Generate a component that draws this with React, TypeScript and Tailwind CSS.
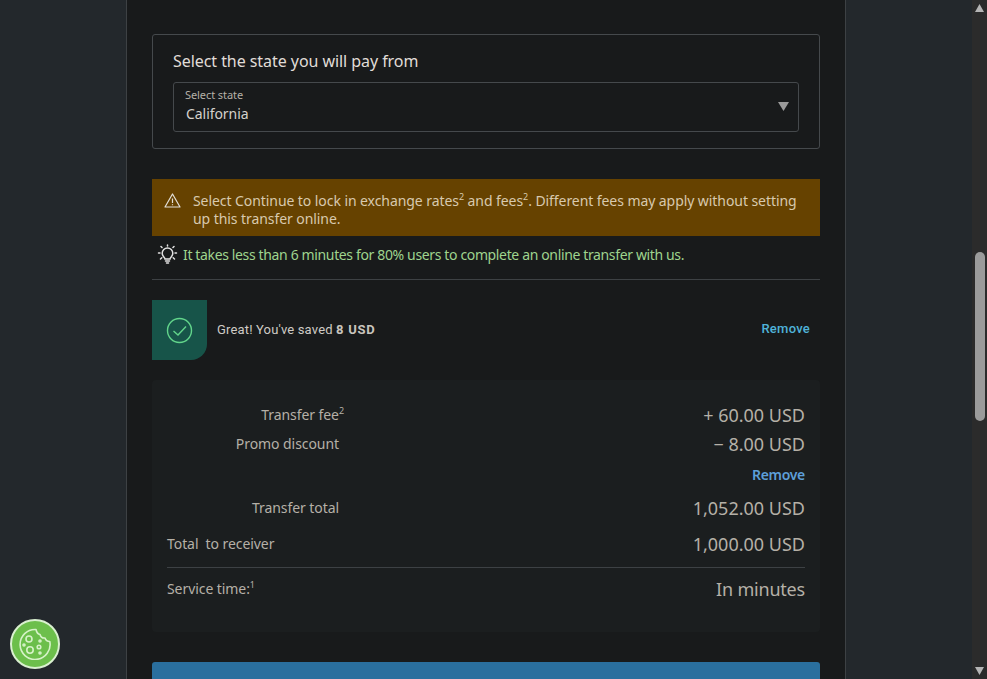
import React from "react";

const Row = ({ label, value, labelClass, rowClass }: { label: React.ReactNode; value: string; labelClass: string; rowClass: string }) => (
  <div className={`flex justify-between items-start ${rowClass}`}>
    <div className={`pt-[2px] text-[14px] leading-[20px] tracking-[-0.07px] text-[#b5b0a7] ${labelClass}`}>{label}</div>
    <div className="text-[18px] leading-[24px] text-[#b5b0a7]">{value}</div>
  </div>
);

const Sup = ({ children, className = "" }: { children: React.ReactNode; className?: string }) => (
  <sup className={`text-[9px] leading-none align-baseline relative -top-[6px] ${className}`}>{children}</sup>
);

export default function App() {
  return (
    <div className="relative flex h-[679px] w-[987px] overflow-hidden bg-[#23282c] font-['Noto_Sans','Open_Sans',sans-serif]">
      <div className="w-[126px] shrink-0 bg-[#23282c]" />
      <main className="w-[720px] shrink-0 border-x border-[#3d4144] bg-[#181a1b] pl-[25px] pr-[25px] pt-[34px]">
        <section className="h-[115px] rounded-[3px] border border-[#45494c] px-5 pt-[14px]">
          <h2 className="text-[16px] leading-[24px] tracking-[-0.06px] text-[#e0ddd8] font-normal">Select the state you will pay from</h2>
          <div className="relative mt-[9px] h-[50px] rounded-[3px] border border-[#45494c] pl-[11px] pt-[5px]">
            <div className="text-[11px] leading-[14px] tracking-[-0.08px] text-[#b5b0a7]">Select state</div>
            <div className="ml-[1px] mt-[2px] text-[14px] leading-[20px] tracking-[-0.06px] text-[#d5d1cb]">California</div>
            <svg className="absolute right-[9px] top-[19px]" width="11" height="9" viewBox="0 0 11 9">
              <path d="M0 0h11L5.500 9z" fill="#9a9a9a" />
            </svg>
          </div>
        </section>

        <div className="mt-[30px] flex h-[57px] bg-[#664200] pl-[12px] pr-[15px] pt-[13px]">
          <svg className="mt-[1px] shrink-0" width="17" height="15" viewBox="0 0 17 15" fill="none" stroke="#e3dfd8" strokeWidth="1.200" strokeLinejoin="round">
            <path d="M8.500 1 16 14H1z" />
            <path d="M8.500 5.500v4.500M8.500 11.300v1" />
          </svg>
          <p className="ml-[12px] text-[14px] leading-[18px] tracking-[-0.07px] text-[#d8c9ae]">
            Select Continue to lock in exchange rates<Sup>2</Sup> and fees<Sup>2</Sup>. Different fees may apply without setting up this transfer online.
          </p>
        </div>

        <div className="mt-[8px] flex h-[21px] items-center pl-[5px]">
          <svg width="21" height="21" viewBox="0 0 21 21" fill="none" stroke="#e2e2e2" strokeWidth="1.500" strokeLinecap="round">
            <path d="M8 15c0-1.500-2.800-2.500-2.800-5.700a5.300 5.300 0 0 1 10.600 0C15.800 12.500 13 13.500 13 15z" />
            <path d="M8.500 17h4M9.500 19h2M10.500 1v1M4 2.500l1 1M17 2.500l-1 1M1.500 9h1.500M18 9h1.500M3.500 15l1.300-1.200M17.500 15l-1.300-1.200" />
          </svg>
          <span className="ml-[5px] text-[14px] leading-[20px] tracking-[-0.36px] text-[#9fd48e]">It takes less than 6 minutes for 80% users to complete an online transfer with us.</span>
        </div>

        <div className="mt-[14px] border-t border-[#3d4144]" />

        <div className="mt-[20px] flex h-[60px] items-center">
          <div className="flex h-full w-[55px] items-center justify-center rounded-br-[16px] bg-[#175449]">
            <svg width="27" height="27" viewBox="0 0 27 27" fill="none" stroke="#62d58b" strokeWidth="1.400">
              <circle cx="13.500" cy="13.500" r="12" />
              <path d="M7.500 14l4.500 4 8-8.500" />
            </svg>
          </div>
          <div className="ml-[10px] font-['Roboto',sans-serif] text-[13px] leading-[18px] tracking-[0.16px] text-[#cfcbc5]">
            Great! You've saved <span className="font-bold tracking-[0.7px] text-[#c9c5be]">8 USD</span>
          </div>
          <div className="ml-auto mr-[10px] mb-[2px] font-['Roboto',sans-serif] text-[13px] font-medium tracking-[0.25px] text-[#4fb3d9]">Remove</div>
        </div>

        <section className="mt-[20px] h-[252px] rounded-[4px] bg-[#1b1e1f] px-[15px] pt-[23px]">
          <Row rowClass="h-[29px]" labelClass="w-[172px] text-right" label={<>Transfer fee<Sup className="-mr-[5px]">2</Sup></>} value="+ 60.00 USD" />
          <Row rowClass="h-[21px]" labelClass="w-[172px] text-right" label="Promo discount" value="− 8.00 USD" />
          <div className="mt-[11px] h-[31px] pt-[1px] text-right text-[14px] font-semibold leading-[20px] tracking-[-0.3px] text-[#5d9fd8]">Remove</div>
          <Row rowClass="h-[36px] pt-[1px]" labelClass="w-[172px] text-right" label="Transfer total" value="1,052.00 USD" />
          <Row rowClass="h-[36px] pt-[1px]" labelClass="" label={<span className="whitespace-pre">Total  to receiver</span>} value="1,000.00 USD" />
          <div className="border-t border-[#3d4144]" />
          <div className="mt-[9px] flex items-start justify-between">
            <div className="text-[14px] leading-[24px] tracking-[-0.07px] text-[#b5b0a7]">Service time:<Sup>1</Sup></div>
            <div className="text-[18px] leading-[24px] tracking-[-0.2px] text-[#b5b0a7]">In minutes</div>
          </div>
        </section>

        <div className="mt-[30px] h-[60px] rounded-t-[3px] bg-[#2a6f9e]" />
      </main>
      <div className="flex-1 bg-[#23282c]" />
      <div className="flex w-[15px] shrink-0 flex-col items-center bg-[#2b2b2b]">
        <svg className="mt-[4px]" width="9" height="8" viewBox="0 0 9 8"><path d="M4.500 0 9 8H0z" fill="#b5b5b5" /></svg>
        <div className="mt-[240px] h-[169px] w-[10px] rounded-full bg-[#9b9b9b]" />
        <svg className="mt-auto mb-[4px]" width="9" height="8" viewBox="0 0 9 8"><path d="M0 0h9L4.500 8z" fill="#b5b5b5" /></svg>
      </div>

      <button className="absolute left-[10px] top-[619px] flex h-[50px] w-[50px] items-center justify-center rounded-full border-2 border-[#d9f0cf] bg-[#6cbf4b]">
        <svg width="32" height="32" viewBox="0 0 32 32" fill="none" stroke="#d6f2c8" strokeWidth="1.600">
          <path d="M17 1.500A15 15 0 1 0 30.800 13.500Q27 13.500 26 10Q22 10.500 21 6.500Q18 6 17 1.500z" strokeLinejoin="round" />
          <circle cx="10" cy="11" r="3" />
          <circle cx="11" cy="22" r="3.200" />
          <circle cx="20" cy="19" r="1.800" />
          <circle cx="21" cy="13" r="1" />
          <circle cx="5" cy="17" r="1" />
          <circle cx="21" cy="25" r="1" />
        </svg>
      </button>
    </div>
  );
}
